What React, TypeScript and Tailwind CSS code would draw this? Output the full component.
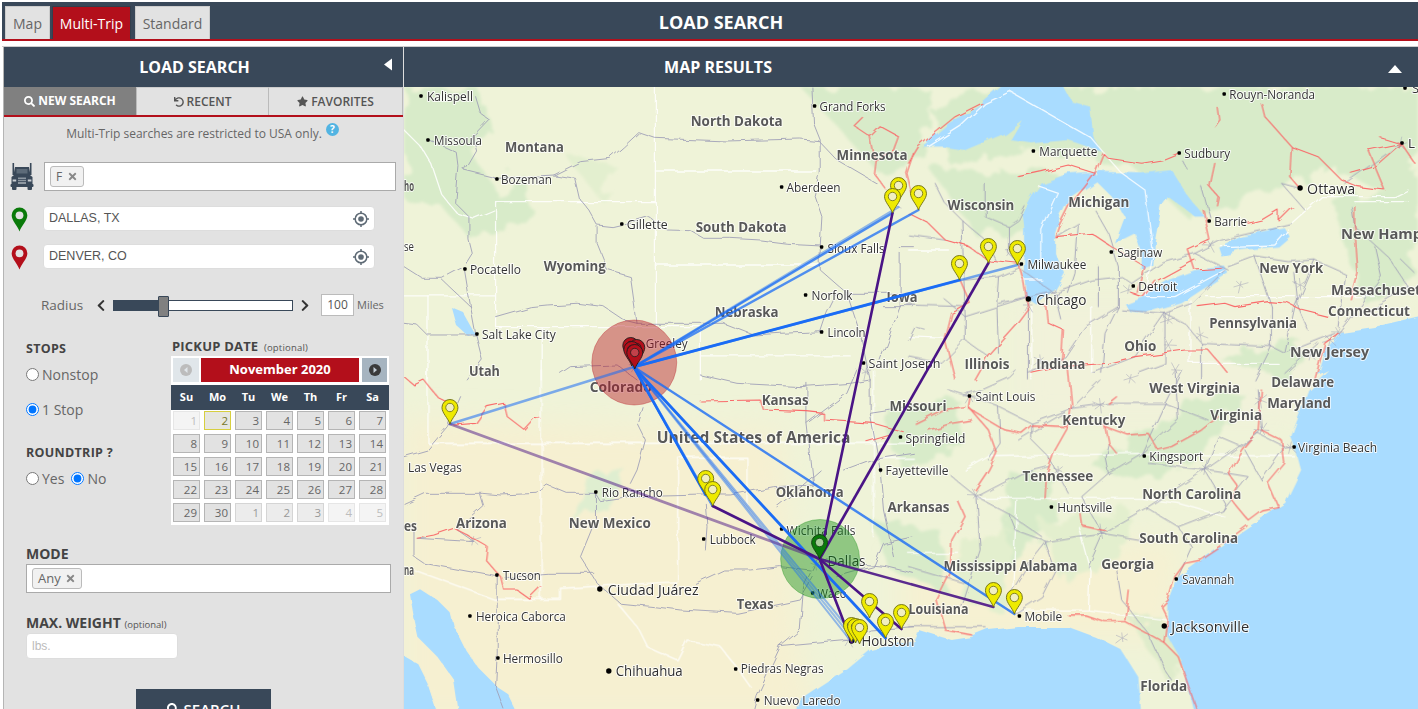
import React from "react";
import { FaSearch, FaUndo, FaStar, FaTimes, FaChevronLeft, FaChevronRight } from "react-icons/fa";

const OS = "font-['Open_Sans','Noto_Sans',sans-serif]";

type L = [string, number, number, number];
const STATES: L[] = [
  ["ho", 403, 191, 10], ["North Dakota", 690, 126, 92], ["Montana", 504, 152, 59], ["South Dakota", 695, 232, 91],
  ["Wyoming", 543, 271, 62], ["Minnesota", 836, 160, 71], ["Nebraska", 714, 317, 64], ["Utah", 468, 376, 31],
  ["Iowa", 886, 302, 31], ["Wisconsin", 947, 210, 67], ["Michigan", 1068, 207, 61], ["New Hampshire", 1341, 239, 118],
  ["New York", 1259, 273, 64], ["Massachusetts", 1331, 295, 103], ["Connecticut", 1328, 316, 82], ["Pennsylvania", 1209, 328, 88],
  ["Ohio", 1124, 351, 32], ["New Jersey", 1290, 357, 79], ["Illinois", 964, 369, 45], ["Indiana", 1036, 369, 49],
  ["Delaware", 1271, 387, 63], ["Maryland", 1267, 408, 64], ["West Virginia", 1149, 393, 91], ["Missouri", 889, 411, 57],
  ["Kentucky", 1062, 425, 63], ["Virginia", 1210, 420, 52], ["Tennessee", 1022, 481, 71], ["North Carolina", 1142, 499, 99],
  ["Arkansas", 887, 512, 62], ["South Carolina", 1139, 543, 99], ["Mississippi", 943, 571, 73], ["Alabama", 1019, 571, 58],
  ["Georgia", 1101, 569, 53], ["Louisiana", 908, 614, 60], ["Florida", 1140, 691, 47], ["Colorado", 589, 392, 62],
  ["Kansas", 761, 405, 47], ["Oklahoma", 775, 497, 68], ["Arizona", 455, 528, 51], ["New Mexico", 568, 528, 82],
  ["Texas", 736, 609, 37], ["na", 403, 575, 10], ["es", 403, 531, 13],
];
const CITIES: L[] = [
  ["Kalispell", 426, 101, 46], ["Missoula", 433, 145, 48], ["Bozeman", 500, 184, 51], ["Gillette", 626, 229, 41],
  ["Grand Forks", 819, 111, 66], ["Aberdeen", 786, 192, 54], ["Sioux Falls", 827, 253, 57], ["Pocatello", 469, 274, 51],
  ["Salt Lake City", 481, 339, 74], ["Norfolk", 811, 300, 41], ["Lincoln", 827, 337, 38], ["Saint Joseph", 868, 368, 72],
  ["Greeley", 645, 348, 42], ["se", 403, 251, 10], ["Las Vegas", 407, 472, 54], ["Marquette", 1039, 156, 58],
  ["Sudbury", 1184, 158, 46], ["Rouyn-Noranda", 1229, 99, 86], ["Barrie", 1214, 226, 33], ["Saginaw", 1117, 257, 45],
  ["Milwaukee", 1027, 269, 59], ["Detroit", 1138, 291, 39], ["Saint Louis", 975, 401, 60], ["Virginia Beach", 1298, 452, 79],
  ["Springfield", 905, 443, 60], ["Kingsport", 1149, 461, 54], ["Fayetteville", 885, 475, 63], ["Huntsville", 1057, 512, 55],
  ["Savannah", 1182, 584, 52], ["Mobile", 1024, 621, 38], ["Rio Rancho", 601, 497, 61], ["Lubbock", 709, 544, 46],
  ["Wichita Falls", 786, 535, 69], ["Tucson", 502, 580, 38], ["Waco", 817, 598, 29], ["Heroica Caborca", 475, 621, 90],
  ["Hermosillo", 502, 663, 60], ["Piedras Negras", 740, 673, 83], ["Nuevo Laredo", 763, 705, 77], ["L", 1408, 148, 7], ["S", 1412, 93, 7],
];
const BIG: L[] = [
  ["Ottawa", 1307, 194, 48], ["Chicago", 1036, 305, 50], ["Jacksonville", 1171, 632, 78], ["Ciudad Juárez", 607, 595, 91],
  ["Houston", 861, 646, 53], ["Chihuahua", 615, 676, 67], ["Dallas", 827, 566, 38],
];
const DOTS: [number, number][] = [
  [420, 96], [427, 140], [496, 179], [621, 224], [814, 106], [781, 187], [821, 247], [464, 269], [476, 334], [805, 295], [821, 332],
  [863, 363], [1033, 151], [1179, 153], [1224, 94], [1209, 221], [1111, 252], [1021, 264], [1133, 286], [969, 396], [1294, 447],
  [900, 437], [1144, 456], [880, 470], [1051, 507], [1176, 579], [1019, 616], [595, 492], [703, 539], [781, 529], [496, 575], [812, 593],
  [469, 616], [497, 658], [735, 669], [757, 700], [1402, 143], [1405, 88],
];
const BIGDOTS: [number, number][] = [[1300, 188], [1028, 299], [1164, 626], [599, 589], [608, 671], [851, 641]];

const WHITE = {
  z3: ["755,141 755,860", "275,485 755,485", "275,485 275,860", "275,860 890,860", "890,860 890,1020", "755,393 1240,393", "755,675 1250,675", "890,948 1340,948", "0,768 275,768", "72,768 72,1020", "412,860 412,1020", "0,270 50,320 80,370 110,460 160,520 210,535 270,510"],
  z4: ["0,890 110,895", "370,800 370,1020", "550,800 550,1000", "0,630 120,630", "340,720 400,720", "845,780 845,970", "845,970 1110,970", "895,770 1400,770", "1340,485 1500,485", "60,320 155,260 230,190 305,155 550,295 600,355 640,400 710,450 735,640 710,770 800,770 950,690", "940,620 1100,615 1140,570", "1150,550 1240,470 1460,470 1500,450", "390,440 450,460 400,570 400,680"],
  z5: ["72,0 72,220 1530,220", "412,0 412,690", "822,262 822,635", "822,262 1030,262 1030,400", "470,655 470,688 270,688 30,600", "640,700 700,770 730,830 820,870 850,810 950,830 990,880 1040,950", "1410,0 1410,500", "1410,265 1530,265", "470,655 822,635"],
  z6: ["170,300 240,260 700,250 1160,260", "205,385 700,385 810,400 950,440", "325,390 310,720", "510,470 545,600 540,720 780,750", "310,720 540,720", "0,550 150,550"],
};
const GRAY = {
  z3: ["215,170 230,220 255,238 205,290 215,330 180,390 280,415 450,405 515,415 530,480 555,510 580,555 625,560 655,553 735,530 790,570 860,572 900,595 980,595 1070,600 1150,610 1250,615", "450,405 530,365 620,355 660,320 705,278 755,295 970,303 1190,297 1245,302 1300,360 1420,430", "1225,141 1230,250 1250,300 1250,400 1235,470 1255,530 1250,620 1250,690 1330,760 1370,880 1400,1020", "580,560 580,610 600,660 610,690 680,710 690,780 700,850", "75,300 160,340 165,380 155,490 195,530 195,600 205,640 180,680 200,800 215,880 235,960 190,1020", "0,680 55,715 115,715 180,680", "115,720 200,800", "0,850 40,855 70,885 215,885", "275,830 380,800 430,795 520,790 600,800 660,840 700,850 850,850 960,850 1050,885 1130,880 1260,875", "470,1000 500,980 640,975 700,1020", "1330,760 1530,760", "1300,760 1270,820 1250,880", "1485,620 1530,620", "1490,640 1490,800 1430,960", "1440,800 1530,800"],
  z5: ["0,400 65,370 235,370 290,375 400,370 430,345 490,370 575,370 590,395 700,380 900,375 980,375 1110,350 1240,345", "715,110 700,160 725,210 700,300 680,340", "170,80 130,170 70,240 0,260", "230,375 240,410 160,480 210,515 40,505", "575,370 575,450 530,560 580,640 650,700 750,710 830,720 1000,730 1190,690 1230,620", "875,640 960,600 1040,600 1130,590 1220,600", "905,400 910,470 905,540", "280,620 280,850 275,950 300,1017", "300,620 430,610 570,610", "30,470 30,560 60,580 280,620", "1240,570 1200,650 1190,780 1130,830 1060,980 1050,1017", "1130,830 1345,810", "1345,810 1400,780 1530,770", "890,15 1000,40 1190,50 1340,40 1400,30", "1210,40 1210,160 1230,340", "1210,160 1330,70 1360,0", "1250,570 1450,590 1530,610", "1120,410 1170,370 1250,300", "1530,500 1440,520 1410,590 1300,620", "1400,30 1400,130 1430,300 1440,420 1470,560", "1320,300 1400,270 1530,250", "1400,130 1530,110"],
  z4: ["230,430 230,530 300,560 330,540 350,500", "80,430 110,490 160,540 230,600 260,660", "0,585 110,600", "340,680 270,710 265,790 270,940", "360,770 170,830 170,900 240,950", "0,795 170,800", "360,800 360,1020", "440,760 550,720 640,710 670,730", "560,510 600,580 630,680 630,800 590,880 580,1000", "670,730 760,670 860,640 940,600 1150,550", "640,810 770,820 830,850 880,910 1090,920 1130,940 1280,880", "950,690 850,790 770,820", "960,680 1040,650 1140,665 1220,660 1310,700 1290,860", "1330,500 1340,560 1440,650 1500,740", "1160,700 1170,800 1200,870", "1175,445 1120,430 1190,510", "880,440 905,530", "550,1000 680,950 770,820", "1310,430 1480,310", "1400,800 1500,740", "50,870 20,860 0,900", "160,540 170,830", "340,690 440,760 460,840", "820,360 840,390", "440,590 510,550 500,700 480,760", "570,680 570,800", "270,790 440,750", "170,720 270,710", "630,800 530,860 470,950 360,1000", "770,820 770,970 690,1000", "880,910 880,1020", "1090,800 1090,920 1040,1020", "1040,650 1090,800", "1220,660 1160,800 1130,940", "1400,620 1420,710 1290,880", "1230,910 1130,1000", "860,640 960,690", "100,770 170,830", "0,950 100,970 170,900", "300,560 300,640 340,680", "1480,660 1521,700"],
  z6: ["185,80 270,110 275,220 240,270", "165,75 210,60 300,20 320,0", "120,60 185,80", "370,160 370,210 420,260 480,370", "420,290 340,310 205,380 130,320", "205,380 300,430 400,500", "205,380 215,540 160,710", "580,490 520,380 600,310 700,250 770,100 820,0", "580,490 500,500 415,515 355,590 300,680", "580,490 700,510", "580,490 720,410 890,300 1050,190", "710,410 810,470 850,530 810,620", "810,470 940,420 1020,320 960,310 890,300 720,280", "540,590 580,500", "625,600 640,690 720,790 770,900 790,930", "410,515 440,600 400,680 320,730", "575,30 490,115 330,210", "1050,190 1130,230 1060,330", "170,640 0,590", "230,770 0,770", "1050,60 1060,180 1000,230 930,200 890,300", "1130,230 1150,235", "490,115 600,100 770,100 900,150", "700,250 810,150 800,0", "600,310 590,260 600,220", "890,300 950,400 940,420", "1010,240 1060,330", "270,110 370,160 490,115", "415,515 320,480 300,430"],
};
const RED = {
  z3: ["1380,235 1355,260 1400,290 1430,260 1485,290 1470,330 1415,360 1400,290", "1415,360 1410,400 1450,450", "1530,340 1510,400 1530,480"],
  z4: ["0,370 30,320 140,230 220,190", "330,410 400,395 480,375 560,400 585,340 600,355 700,370 760,360 810,340", "560,400 530,440 480,500 450,560 440,590 550,580 610,620 710,680 690,760", "1060,190 1070,230 1150,320 1230,350 1300,420 1350,440 1430,450 1380,330 1480,310", "1150,320 1145,410 1175,445", "920,370 905,440 930,470 925,495", "885,510 905,600 840,630 860,690 940,685", "1020,550 1060,540 1110,510 1110,540 1150,500", "930,205 935,240 920,260", "0,520 60,550 110,600 180,620 240,660 330,670 345,720 360,810", "155,720 185,790 130,820 110,900 140,1020", "360,810 330,850 240,950 200,1020", "415,800 420,850 465,870 460,960", "370,1000 460,980 600,970 680,950 830,930 900,930 960,1000", "870,800 950,790 980,800 1080,785 1140,790 1180,810 1260,830", "1290,880 1250,910 1220,1020", "1340,500 1340,560 1350,700 1330,780", "1480,310 1400,380 1330,400", "1415,290 1480,310 1521,370", "670,760 700,770 740,720", "750,720 860,660"],
  z5: ["890,93 1070,90 1080,120 1210,125 1260,130 1260,150 1410,160 1500,185", "1390,215 1460,195", "0,20 30,45 60,30 100,80 140,100", "150,165 215,160 250,110 300,100 310,140 360,178 390,145 410,148", "40,505 90,495 150,475 190,495 250,530 245,570 290,620 300,660 340,660 375,685 410,650"],
  z6: ["185,80 180,110 240,180 265,250 240,300 200,360", "20,160 100,120 170,110", "60,180 130,160 190,150", "180,115 290,180 340,190 370,165 480,170", "480,0 490,100 480,170 440,240 415,310 410,385", "150,395 170,440 130,510 125,610 85,690 110,780 190,795", "590,170 600,220 625,250", "590,170 660,195 720,190 750,240 790,230 880,180 930,140", "600,100 625,80", "1060,60 1050,180 1000,240 960,310 990,350 970,390 1020,450 1060,420 1110,410 1080,340 1130,280 1120,210 1060,180", "1020,470 940,530 880,570 830,580 800,620 780,690 760,710 780,750 770,820 810,860 865,1017", "480,735 530,735 590,755 650,755 770,820", "660,660 650,750", "515,430 520,465 590,480"],
};
const HUBS: [number, number][] = [
  [1028, 305], [1128, 290], [1101, 532], [969, 396], [865, 372], [815, 565], [848, 640], [1168, 320], [1200, 335], [1338, 332], [1310, 355],
  [1260, 400], [1210, 245], [1400, 145], [893, 205], [635, 365], [472, 540], [1058, 470], [975, 495], [1205, 468], [1040, 360], [1175, 370],
  [1130, 378], [1100, 405], [1262, 430], [1290, 447], [1122, 638], [1168, 345], [1240, 285], [1300, 285], [1010, 250], [1330, 340],
];

type Seg = Record<"z3" | "z4" | "z5" | "z6", string[]>;
const TF: Record<string, string> = {
  z3: "translate(403 40) scale(.3333)",
  z4: "translate(908 40) scale(.3333)",
  z5: "translate(403 370) scale(.3333)",
  z6: "translate(908 370) scale(.3333)",
};
function Lines({ data, color, width, opacity = 1 }: { data: Partial<Seg>; color: string; width: number; opacity?: number }) {
  return (
    <g fill="none" stroke={color} strokeWidth={width} opacity={opacity} strokeLinejoin="round" strokeLinecap="round" filter="url(#wavy)">
      {Object.entries(data).map(([k, arr]) => (
        <g key={k} transform={TF[k]}>
          {(arr as string[]).map((pts, i) => (
            <polyline key={i} points={pts} vectorEffect="non-scaling-stroke" />
          ))}
        </g>
      ))}
    </g>
  );
}

const PIN = "M0,0 C-2,-6 -8,-11 -8,-16.5 A8,8 0 1 1 8,-16.5 C8,-11 2,-6 0,0Z";
function Pin({ x, y, fill, edge, hole }: { x: number; y: number; fill: string; edge: string; hole: string }) {
  return (
    <g transform={`translate(${x} ${y})`}>
      <path d={PIN} fill={fill} stroke={edge} strokeWidth={0.9} />
      <circle cy={-16.5} r={4.2} fill={hole} stroke={edge} strokeWidth={0.8} />
    </g>
  );
}
const YELLOW: [number, number][] = [
  [898, 202], [892, 213], [918, 210], [988, 263], [1017, 265], [959, 280], [449, 424], [705, 495], [712, 506],
  [869, 618], [885, 638], [901, 629], [993, 607], [1014, 614], [851, 642], [855, 643], [859, 644],
];
const HUB = "633 367";
const BLUE: [string, number, number][] = [
  ["892 213", 2.4, 0.75], ["898 207", 2.4, 0.45], ["918 210", 2.4, 0.75], ["959 280", 2.8, 1], ["1017 265", 2.4, 0.6],
  ["449 424", 2.4, 0.55], ["705 495", 2.6, 1], ["712 506", 2.6, 0.7], ["851 642", 2, 0.45], ["855 642", 2, 0.4], ["859 642", 2, 0.45],
  ["885 638", 2.8, 1], ["1014 614", 2.4, 0.8],
];
const PURPLE: [string, number, number][] = [
  ["892 213", 2.6, 1], ["988 263", 2.6, 1], ["712 506", 2.6, 1], ["449 424", 2.8, 0.5], ["993 607", 2.6, 0.9], ["901 629", 2.6, 1], ["851 642", 2.6, 1],
];
const FILTER_BOX = { filterUnits: "userSpaceOnUse" as const, x: 403, y: 87, width: 1015, height: 622 };

function MapView() {
  return (
    <svg viewBox="403 87 1015 622" className={`block w-full h-full ${OS}`} preserveAspectRatio="none">
      <defs>
        <filter id="rough" {...FILTER_BOX}>
          <feTurbulence type="fractalNoise" baseFrequency="0.045" numOctaves="3" seed="5" />
          <feDisplacementMap in="SourceGraphic" scale="26" />
          <feGaussianBlur stdDeviation="1.6" />
        </filter>
        <filter id="coast" {...FILTER_BOX}>
          <feTurbulence type="fractalNoise" baseFrequency="0.05" numOctaves="3" seed="9" />
          <feDisplacementMap in="SourceGraphic" scale="7" />
        </filter>
        <filter id="wavy" {...FILTER_BOX}>
          <feTurbulence type="fractalNoise" baseFrequency="0.06" numOctaves="2" seed="3" />
          <feDisplacementMap in="SourceGraphic" scale="6" />
        </filter>
        <filter id="soft"><feGaussianBlur stdDeviation="14" /></filter>
      </defs>
      <rect x="403" y="87" width="1015" height="622" fill="#eff3d8" />
      <g filter="url(#soft)">
        <polygon points="403,420 780,430 800,660 820,720 403,720" fill="#f6f0d1" />
        <polygon points="900,560 1180,540 1170,640 900,640" fill="#f6f1d2" />
        <polygon points="1020,300 1420,300 1300,420 1020,420" fill="#f1f2da" />
      </g>
      <g filter="url(#rough)" fill="#d8ebc9">
        <polygon points="403,90 480,87 490,130 470,150 500,200 520,170 530,215 470,240 440,205 403,200" />
        <polygon points="1000,87 1418,87 1418,210 1340,170 1250,190 1190,220 1130,165 1040,150 950,165 930,110" />
        <polygon points="800,87 930,87 925,160 880,175 840,130" />
        <polygon points="930,170 1060,175 1020,230 980,240" />
        <polygon points="1330,200 1418,190 1418,280 1360,300" />
        <polygon points="880,410 960,400 960,445 900,470" />
        <polygon points="1090,465 1160,425 1220,385 1245,395 1210,445 1150,480" />
        <polygon points="870,520 940,530 945,590 890,570" />
        <polygon points="1010,470 1060,480 1040,540 1000,570" />
        <polygon points="1220,360 1300,340 1290,380" />
        <polygon points="560,150 620,170 600,200" fill="#e3efcf" />
        <polygon points="570,520 610,510 625,470 590,470" fill="#dfeed0" />
        <polygon points="1130,620 1180,620 1175,690" fill="#dfeccb" />
        <polygon points="1040,520 1130,510 1120,560 1060,580" fill="#e3efce" />
        <polygon points="960,540 1010,530 1000,610 960,600" fill="#e3efce" />
      </g>
      <g fill="#a9dcff" filter="url(#coast)">
        <polygon points="1425,316 1375,328 1341,333 1325,353 1318,375 1328,370 1308,390 1291,437 1295,448 1301,470 1285,503 1248,527 1225,543 1201,560 1178,577 1168,603 1168,637 1181,660 1195,715 1141,715 1138,677 1121,650 1095,637 1068,627 1041,627 1018,627 988,630 971,637 951,640 918,630 913,640 870,650 846,670 820,687 796,703 793,715 1425,715" />
        <polygon transform="translate(403 570) scale(.3333)" points="15,70 45,55 100,90 140,130 150,170 185,240 220,290 280,350 310,370 340,430 165,430 150,330 100,260 40,200 25,130" />
        <polygon transform="translate(403 570) scale(.3333)" points="-20,245 40,280 70,340 100,430 -20,430" />
        <g transform="translate(908 40) scale(.3333)">
          <polygon points="40,320 120,250 220,190 290,130 460,130 490,185 545,200 555,290 580,335 480,300 370,310 305,300 340,240 290,280 170,330 100,320" />
          <polygon points="345,520 370,470 400,430 480,400 560,395 570,420 480,480 455,530 440,580 440,640 470,700 440,750 380,790 350,770 345,700 350,620 350,560" />
          <polygon points="570,395 700,400 790,390 840,470 890,530 860,530 780,470 760,500 740,600 735,680 700,690 700,640 680,580 620,610 650,530 610,470 560,420" />
          <polygon points="650,790 700,770 780,720 860,690 950,680 960,700 880,750 820,790 720,820 660,810" />
          <polygon points="930,620 1000,590 1130,565 1145,590 1110,620 1000,630 940,650" />
        </g>
        <polygon points="450,307 462,312 475,335 468,337 455,325" />
      </g>
      <Lines data={WHITE} color="#ffffff" width={1.3} opacity={0.85} />
      <Lines data={GRAY} color="#a0a0b8" width={0.9} />
      <g stroke="#a0a0b8" strokeWidth={0.7} fill="none" opacity={0.7}>
        {HUBS.map(([x, y], i) =>
          [0, 1, 2, 3, 4, 5].map((n) => {
            const a = n * 1.05 + i * 0.7;
            const r = 4 + ((n * 3 + i) % 4) * 1.5;
            return <path key={`${i}-${n}`} d={`M${x} ${y} L${(x + Math.cos(a) * r).toFixed(1)} ${(y + Math.sin(a) * r).toFixed(1)}`} />;
          })
        )}
      </g>
      <Lines data={RED} color="#f96a6a" width={1.1} />
      <g stroke="#ffffff" strokeLinejoin="round">
        {STATES.map(([t, x, y, w]) => (
          <text key={t} x={x} y={y} textLength={w} lengthAdjust="spacingAndGlyphs" fontSize={14} fontWeight={700} fill="#585858" strokeWidth={2} strokeOpacity={0.75} style={{ paintOrder: "stroke" }}>{t}</text>
        ))}
        <text x={656} y={443} textLength={194} lengthAdjust="spacingAndGlyphs" fontSize={15.5} fontWeight={700} fill="#585858" strokeWidth={2} strokeOpacity={0.75} style={{ paintOrder: "stroke" }}>United States of America</text>
        {CITIES.map(([t, x, y, w]) => (
          <text key={t} x={x} y={y} textLength={w} lengthAdjust="spacingAndGlyphs" fontSize={12.5} fill="#333333" strokeWidth={2} strokeOpacity={0.85} style={{ paintOrder: "stroke" }}>{t}</text>
        ))}
        {BIG.map(([t, x, y, w]) => (
          <text key={t} x={x} y={y} textLength={w} lengthAdjust="spacingAndGlyphs" fontSize={15} fill="#2e2e2e" strokeWidth={2} strokeOpacity={0.85} style={{ paintOrder: "stroke" }}>{t}</text>
        ))}
      </g>
      <g fill="#000000">
        {DOTS.map(([x, y], i) => <rect key={i} x={x - 1.7} y={y - 1.7} width={3.4} height={3.4} rx={1} />)}
        {BIGDOTS.map(([x, y], i) => <circle key={i} cx={x} cy={y} r={2.7} />)}
      </g>
      <circle cx={633.5} cy={362.5} r={42.5} fill="#b30f1b" fillOpacity={0.42} stroke="#b30f1b" strokeOpacity={0.35} />
      <circle cx={819.5} cy={559} r={39.5} fill="#0b8a0b" fillOpacity={0.42} stroke="#0b8a0b" strokeOpacity={0.35} />
      <g fill="none" strokeLinecap="round">
        {BLUE.map(([to, w, o], i) => (
          <path key={i} d={`M${HUB} L${to}`} stroke="#1a6cf5" strokeWidth={w} strokeOpacity={o} />
        ))}
        {PURPLE.map(([to, w, o], i) => (
          <path key={i} d={`M819 559 L${to}`} stroke="#4a1486" strokeWidth={w} strokeOpacity={o} />
        ))}
      </g>
      {YELLOW.map(([x, y], i) => <Pin key={i} x={x} y={y} fill="#eeea00" edge="#6b6b10" hole="#f1efc0" />)}
      <Pin x={630} y={362} fill="#b30f1b" edge="#1d1d1d" hole="#b30f1b" />
      <Pin x={636} y={364} fill="#b30f1b" edge="#1d1d1d" hole="#b30f1b" />
      <Pin x={631} y={366} fill="#b30f1b" edge="#1d1d1d" hole="#b30f1b" />
      <Pin x={634} y={369} fill="#b30f1b" edge="#1d1d1d" hole="#c2414a" />
      <Pin x={819} y={559} fill="#0a7a0a" edge="#123a12" hole="#a9cf9a" />
    </svg>
  );
}

function Truck() {
  return (
    <svg viewBox="0 0 24 28" className="w-[24px] h-[28px]" fill="#394859">
      <rect x="2.5" y="0" width="1.6" height="12" />
      <rect x="19.9" y="0" width="1.6" height="12" />
      <path d="M5 4 H19 L20.5 12 H3.5Z" />
      <rect x="6.5" y="6" width="11" height="4.5" fill="#5d6b79" />
      <path d="M1.5 14 L4 12 H20 L22.5 14 V22 H1.5Z" />
      <rect x="8" y="14.5" width="8" height="7" fill="#8d97a1" />
      <rect x="8" y="16" width="8" height="0.8" fill="#394859" />
      <rect x="8" y="18" width="8" height="0.8" fill="#394859" />
      <rect x="2.6" y="16.5" width="3.6" height="2" fill="#c9ced3" />
      <rect x="17.8" y="16.5" width="3.6" height="2" fill="#c9ced3" />
      <rect x="0.5" y="21" width="23" height="3" rx="1" />
      <rect x="2" y="23" width="4.5" height="4" rx="1" />
      <rect x="17.5" y="23" width="4.5" height="4" rx="1" />
    </svg>
  );
}
function SidePin({ color }: { color: string }) {
  return (
    <svg viewBox="-8.5 -25 17 25.5" className="w-[17px] h-[25px]">
      <path d={PIN} fill={color} />
      <circle cy={-16.5} r={4} fill="#e2e2e2" />
    </svg>
  );
}
function Target() {
  return (
    <svg viewBox="0 0 16 16" className="w-[16px] h-[16px] shrink-0">
      <circle cx="8" cy="8" r="5.8" fill="none" stroke="#5f6b76" strokeWidth="1.5" />
      <circle cx="8" cy="8" r="2.8" fill="#5f6b76" />
      <path d="M8 0V3M8 13V16M0 8H3M13 8H16" stroke="#5f6b76" strokeWidth="1.5" />
    </svg>
  );
}
function Tag({ label, cls }: { label: string; cls: string }) {
  return (
    <span className={`flex items-center justify-between rounded-[3px] border border-[#bbbbbb] bg-[#f1f1f1] text-[#666666] ${cls}`}>
      {label}
      <FaTimes className="w-[11px] h-[11px] text-[#888888]" />
    </span>
  );
}
function LocInput({ value }: { value: string }) {
  return (
    <div className="w-[332px] h-[25px] bg-white rounded-[4px] border border-[#dddddd] flex items-center justify-between pl-[5px] pr-[5px] font-['Liberation_Sans',sans-serif] text-[12.5px] text-[#555555]">
      {value}
      <Target />
    </div>
  );
}
function Radio({ checked, name }: { checked?: boolean; name: string }) {
  return <input type="radio" name={name} defaultChecked={checked} className="w-[13px] h-[13px] m-0 shrink-0 accent-[#0075ff]" />;
}

const DAYS: [number, "o" | "n" | "m"][] = [
  [1, "o"], ...Array.from({ length: 29 }, (_, i) => [i + 2, "n"] as [number, "n"]), [1, "m"], [2, "m"], [3, "m"], [4, "o"], [5, "o"],
];
function Calendar() {
  return (
    <div className="w-[218px] h-[169px] bg-white flex flex-col">
      <div className="flex h-[26px] shrink-0 pt-[2px] px-[2px] gap-[2px]">
        <div className="w-[26px] h-[24px] bg-[#e0e6ea] flex items-center justify-center">
          <svg viewBox="0 0 12 12" className="w-[12px] h-[12px]"><circle cx="6" cy="6" r="6" fill="#bcbcbc" /><path d="M7.5 3 L4 6 L7.5 9Z" fill="#e0e6ea" /></svg>
        </div>
        <div className="w-[158px] h-[24px] bg-[#b30f1b] text-white font-bold text-[13px] flex items-center justify-center">November 2020</div>
        <div className="w-[25px] h-[24px] ml-[1px] bg-[#a6b4c0] flex items-center justify-center">
          <svg viewBox="0 0 12 12" className="w-[12px] h-[12px]"><circle cx="6" cy="6" r="6" fill="#3a3a3a" /><path d="M4.5 3 L8 6 L4.5 9Z" fill="#c4ced6" /></svg>
        </div>
      </div>
      <div className="grid grid-cols-7 h-[25px] shrink-0 mt-[3px] bg-[#394859] text-white font-bold text-[11px] items-center text-center pr-[1px]">
        {["Su", "Mo", "Tu", "We", "Th", "Fr", "Sa"].map((d) => <span key={d}>{d}</span>)}
      </div>
      <div className="grid grid-cols-[repeat(7,27px)] gap-x-[4px] gap-y-[4px] auto-rows-[19px] pl-[2px] pt-[1px]">
        {DAYS.map(([d, k], i) => (
          <div
            key={i}
            className={`text-right pr-[2px] text-[11.5px] leading-[18px] border ${
              i === 1
                ? "border-[#d7cf3f] bg-[#e6e6e0] text-[#77772a]"
                : k === "n"
                ? "border-[#b5b5b5] bg-[#e2e2e2] text-[#666666]"
                : k === "m"
                ? "border-[#d5d5d5] bg-[#ececec] text-[#999999]"
                : "border-[#e6e6e6] bg-[#f4f4f4] text-[#bdbdbd]"
            }`}
          >
            {d}
          </div>
        ))}
      </div>
    </div>
  );
}

function Sidebar() {
  return (
    <aside className="w-[400px] shrink-0 border-l border-l-[#b5b5b5] bg-[#e2e2e2] flex flex-col overflow-hidden *:shrink-0">
      <header className="relative h-[40px] bg-[#394859] text-white font-bold text-[16px] flex items-center justify-center pr-[18px]">
        LOAD SEARCH
        <svg viewBox="0 0 8 12" className="absolute right-[11px] top-[11px] w-[8px] h-[13px]"><path d="M8 0V12L0 6Z" fill="#ffffff" /></svg>
      </header>
      <div className="flex h-[30px] border-b-2 border-b-[#b30f1b] text-[12px] font-semibold">
        <div className="w-[132px] bg-[#808080] text-white font-bold flex items-center justify-center gap-[3px]"><FaSearch className="w-[11px] h-[11px]" />NEW SEARCH</div>
        <div className="w-[132px] border-l border-l-[#bbbbbb] border-t border-t-[#cccccc] text-[#555555] flex items-center justify-center gap-[3px]"><FaUndo className="w-[10px] h-[10px]" />RECENT</div>
        <div className="flex-1 border-x border-x-[#bbbbbb] border-t border-t-[#cccccc] text-[#555555] flex items-center justify-center gap-[3px]"><FaStar className="w-[11px] h-[11px]" />FAVORITES</div>
      </div>
      <p className="relative h-[45px] pt-[8px] text-center text-[12px] text-[#666666] pr-[2px]">
        Multi-Trip searches are restricted to USA only.
        <span className="inline-flex align-top ml-[4px] mt-[-2px] w-[13px] h-[13px] rounded-full bg-[#52b4e2] text-white text-[10px] font-bold items-center justify-center">?</span>
      </p>
      <div className="flex items-center pl-[6px] h-[29px]">
        <div className="w-[24px] mr-[10px]"><Truck /></div>
        <div className="w-[352px] h-[29px] bg-white border border-[#aaaaaa] flex items-center pl-[5px]">
          <Tag label="F" cls="w-[34px] h-[21px] px-[5px] text-[12px]" />
        </div>
      </div>
      <div className="flex items-center pl-[7px] mt-[15px] h-[25px]">
        <div className="w-[17px] mr-[15px] mt-[2px]"><SidePin color="#0a7a0a" /></div>
        <LocInput value="DALLAS, TX" />
      </div>
      <div className="flex items-center pl-[7px] mt-[13px] h-[25px]">
        <div className="w-[17px] mr-[15px] mt-[2px]"><SidePin color="#b30f1b" /></div>
        <LocInput value="DENVER, CO" />
      </div>
      <div className="flex items-center mt-[25px] h-[22px] pl-[37px]">
        <span className="w-[55px] text-[13.5px] text-[#666666]">Radius</span>
        <FaChevronLeft className="w-[10px] h-[13px] text-[#333333]" />
        <div className="relative ml-[7px] w-[180px] h-[11px] border border-[#394859] bg-white">
          <div className="h-full w-[48px] bg-[#394859]" />
          <div className="absolute left-[44px] top-[-5px] w-[11px] h-[21px] bg-[#808080] border border-[#394859] rounded-[1px]" />
        </div>
        <FaChevronRight className="ml-[7px] w-[10px] h-[13px] text-[#333333]" />
        <div className="ml-[11px] w-[33px] h-[22px] bg-white border border-[#bbbbbb] text-center text-[12px] leading-[20px] text-[#555555]">100</div>
        <span className="ml-[3px] text-[11px] text-[#666666]">Miles</span>
      </div>
      <div className="flex mt-[21px] pl-[22px]">
        <div className="w-[146px] pt-[3px] text-[#666666] text-[14px]">
          <h4 className="font-bold text-[12.5px] tracking-[0.3px] text-[#444444] leading-[18px]">STOPS</h4>
          <label className="flex items-center gap-[3px] h-[20px] mt-[6px]"><Radio name="s" />Nonstop</label>
          <label className="flex items-center gap-[3px] h-[20px] mt-[15px]"><Radio name="s" checked />1 Stop</label>
          <h4 className="font-bold text-[12.5px] tracking-[0.3px] text-[#444444] leading-[18px] mt-[25px]">ROUNDTRIP ?</h4>
          <div className="flex items-center h-[20px] mt-[6px]">
            <label className="flex items-center gap-[3px]"><Radio name="r" />Yes</label>
            <label className="flex items-center gap-[3px] ml-[7px]"><Radio name="r" checked />No</label>
          </div>
        </div>
        <div className="ml-[-1px]">
          <div className="h-[19px] pl-[1px] text-[13px] leading-[19px] font-bold text-[#444444] tracking-[0.2px] whitespace-nowrap">PICKUP DATE <span className="font-normal text-[9.5px] text-[#555555] ml-[2px]">(optional)</span></div>
          <Calendar />
        </div>
      </div>
      <div className="pl-[22px] mt-[19px]">
        <h4 className="font-bold text-[14px] leading-[20px] h-[20px] text-[#444444]">MODE</h4>
        <div className="w-[365px] h-[29px] bg-white border border-[#aaaaaa] flex items-center pl-[5px]">
          <Tag label="Any" cls="w-[50px] h-[21px] px-[5px] text-[13px]" />
        </div>
        <h4 className="font-bold text-[14px] leading-[20px] h-[20px] text-[#444444] mt-[20px]">MAX. WEIGHT <span className="font-normal text-[9.5px] text-[#555555]">(optional)</span></h4>
        <div className="w-[152px] h-[26px] bg-white border border-[#dddddd] rounded-[4px] pl-[5px] font-['Liberation_Sans',sans-serif] text-[12px] leading-[24px] text-[#bbbbbb]">lbs.</div>
        <button className="block w-[135px] h-[40px] mt-[30px] ml-[110px] bg-[#394859] text-white text-[15px] font-semibold">
          <span className="flex items-center justify-center gap-[5px]"><FaSearch className="w-[12px] h-[12px]" />SEARCH</span>
        </button>
      </div>
    </aside>
  );
}

export default function App() {
  return (
    <div className={`h-[709px] w-[1418px] overflow-hidden bg-white pt-[2px] pl-[2px] ${OS}`}>
      <nav className="relative h-[39px] bg-[#394859] border-b-2 border-b-[#b30f1b] flex items-end pl-[3px] gap-[2px]">
        <div className="w-[45px] h-[33px] bg-[#e2e2e2] border-t border-x border-[#cccccc] text-[#666666] text-[14px] flex items-center justify-center">Map</div>
        <div className="w-[79px] h-[33px] bg-[#b30f1b] border-t border-x border-[#333f4d] text-white text-[14px] flex items-center justify-center">Multi-Trip</div>
        <div className="w-[75px] h-[33px] ml-[2px] bg-[#e2e2e2] border-t border-x border-[#cccccc] text-[#666666] text-[14px] flex items-center justify-center">Standard</div>
        <h1 className="absolute left-[619px] w-[200px] top-[8px] text-center text-white font-bold text-[18px] leading-[24px]">LOAD SEARCH</h1>
      </nav>
      <div className="flex h-[668px] mt-[5px] pl-[1px] border-t border-t-[#cccccc]">
        <Sidebar />
        <main className="flex-1 flex flex-col min-w-0 border-l border-l-[#dddddd]">
          <header className="relative h-[40px] shrink-0 bg-[#394859] text-white font-bold text-[16px] flex items-center justify-center pr-[386px]">
            MAP RESULTS
            <svg viewBox="0 0 14 8" className="absolute right-[16px] top-[18px] w-[14px] h-[8px]"><path d="M0 8H14L7 0Z" fill="#ffffff" /></svg>
          </header>
          <div className="h-[622px] shrink-0"><MapView /></div>
        </main>
      </div>
    </div>
  );
}
